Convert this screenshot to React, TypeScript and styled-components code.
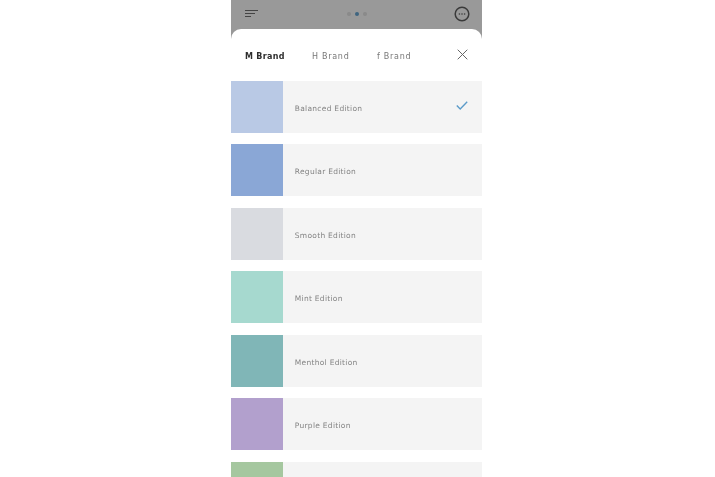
import React from "react";
import styled, { createGlobalStyle } from "styled-components";

const Global = createGlobalStyle`
  html, body { margin: 0; padding: 0; background: #fff; height: 477px; overflow: hidden; }
  #root { height: 477px; overflow: hidden; }
`;

const Page = styled.div`
  display: flex;
  height: 477px;
  padding-left: 231px;
  overflow: hidden;
  font-family: "DejaVu Sans", sans-serif;
`;
const Phone = styled.div`
  width: 251px;
  height: 477px;
  display: flex;
  flex-direction: column;
  overflow: hidden;
  background: #999;
`;
const TopBar = styled.header`
  height: 29px;
  flex: none;
  display: flex;
  align-items: center;
  justify-content: space-between;
  padding: 0 12px 2px 14px;
  box-sizing: border-box;
  filter: blur(0.3px);
`;
const Menu = styled.div`
  display: flex;
  flex-direction: column;
  gap: 1.6px;
  width: 14px;
  i { display: block; height: 1.6px; background: #444; }
  i:nth-child(1) { width: 13px; }
  i:nth-child(2) { width: 10px; }
  i:nth-child(3) { width: 6px; }
`;
const Dots = styled.div`
  display: flex;
  gap: 4px;
  align-items: center;
`;
const Dot = styled.span<{ $on?: boolean }>`
  width: 4px;
  height: 4px;
  border-radius: 50%;
  background: ${(p) => (p.$on ? "#3f6580" : "#8a8a8a")};
`;
const Sheet = styled.main`
  flex: 1;
  background: #fff;
  border-radius: 10px 10px 0 0;
  overflow: hidden;
`;
const Tabs = styled.nav`
  height: 51.75px;
  display: flex;
  align-items: center;
  padding: 3px 14px 0 14px;
  box-sizing: border-box;
`;
const Tab = styled.span<{ $on?: boolean; $w: number }>`
  width: ${(p) => p.$w}px;
  font-size: 8px;
  letter-spacing: ${(p) => (p.$on ? "0.3px" : "0.72px")};
  white-space: nowrap;
  color: ${(p) => (p.$on ? "#2e2e2e" : "#777")};
  font-weight: ${(p) => (p.$on ? 700 : 400)};
  filter: blur(0.25px);
`;
const Close = styled.button`
  margin-left: auto;
  margin-top: -3px;
  margin-right: 0;
  padding: 0;
  border: 0;
  background: none;
  display: flex;
`;
const List = styled.ul`
  list-style: none;
  margin: 0;
  padding: 0;
  display: flex;
  flex-direction: column;
  gap: 11.5px;
`;
const Row = styled.li`
  display: flex;
  align-items: center;
  flex: none;
  height: 52px;
  background: #f4f4f4;
`;
const Swatch = styled.div<{ $c: string }>`
  width: 52.3px;
  height: 52px;
  background: ${(p) => p.$c};
`;
const Label = styled.span`
  margin-left: 11.5px;
  margin-top: 3px;
  font-size: 7.5px;
  letter-spacing: 0.28px;
  color: #838383;
  filter: blur(0.25px);
`;
const Check = styled.svg`
  margin-left: auto;
  margin-right: 14px;
  margin-top: -2px;
`;

const items: [string, string][] = [
  ["#b9c9e5", "Balanced Edition"],
  ["#8aa7d6", "Regular Edition"],
  ["#d9dbe0", "Smooth Edition"],
  ["#a6d9cf", "Mint Edition"],
  ["#80b6b7", "Menthol Edition"],
  ["#b2a0cd", "Purple Edition"],
  ["#a5c79f", ""],
];

export default function App() {
  return (
    <Page>
      <Global />
      <Phone>
        <TopBar>
          <Menu><i /><i /><i /></Menu>
          <Dots><Dot /><Dot $on /><Dot /></Dots>
          <svg width="16" height="16" viewBox="0 0 16 16">
            <circle cx="8" cy="8" r="6.8" fill="none" stroke="#3a3a3a" strokeWidth="1.5" />
            <circle cx="5.4" cy="8" r=".8" fill="#3a3a3a" />
            <circle cx="8" cy="8" r=".8" fill="#3a3a3a" />
            <circle cx="10.6" cy="8" r=".8" fill="#3a3a3a" />
          </svg>
        </TopBar>
        <Sheet>
          <Tabs>
            <Tab $on $w={67}>M Brand</Tab>
            <Tab $w={65}>H Brand</Tab>
            <Tab $w={40}>f Brand</Tab>
            <Close aria-label="close">
              <svg width="11" height="11" viewBox="0 0 11 11">
                <path d="M.7.7l9.6 9.6M10.3.7L.7 10.3" stroke="#666" strokeWidth="1" fill="none" />
              </svg>
            </Close>
          </Tabs>
          <List>
            {items.map(([c, t], i) => (
              <Row key={c}>
                <Swatch $c={c} />
                <Label>{t}</Label>
                {i === 0 && (
                  <Check width="12" height="9" viewBox="0 0 12 9">
                    <path d="M.8 4.5l3.4 3.4L11.2.8" stroke="#5b9bc9" strokeWidth="1.4" fill="none" />
                  </Check>
                )}
              </Row>
            ))}
          </List>
        </Sheet>
      </Phone>
    </Page>
  );
}
